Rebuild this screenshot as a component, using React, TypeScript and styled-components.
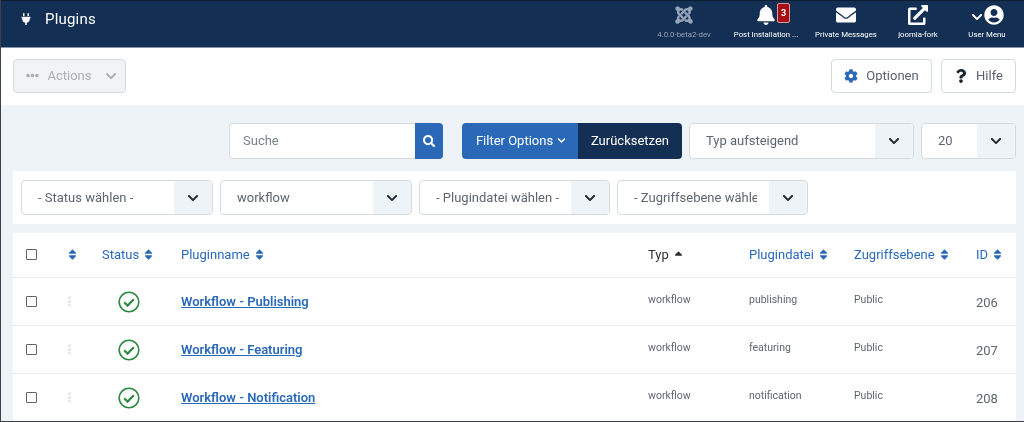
import React from 'react'
import styled, { createGlobalStyle } from 'styled-components'
import {
  FaBell,
  FaChevronDown,
  FaCog,
  FaEllipsisH,
  FaEllipsisV,
  FaEnvelope,
  FaExternalLinkAlt,
  FaJoomla,
  FaPlug,
  FaQuestion,
  FaSearch,
  FaSort,
  FaSortUp,
  FaUserCircle,
} from 'react-icons/fa'

const GlobalStyle = createGlobalStyle`
  html, body {
    margin: 0;
    padding: 0;
    background: #eef3f8;
    overflow: hidden;
  }
  * {
    box-sizing: border-box;
  }
`

const Page = styled.div`
  width: 1024px;
  height: 422px;
  overflow: hidden;
  display: flex;
  flex-direction: column;
  background: #eef3f8;
  border-left: 1px solid #3c4048;
  border-bottom: 1px solid #3c4048;
  font-family: Roboto, 'Liberation Sans', sans-serif;
  color: #5d6670;
  filter: blur(0.35px);
`

const Header = styled.header`
  height: 48px;
  flex: none;
  display: flex;
  align-items: stretch;
  justify-content: space-between;
  background: #132f53;
  border-top: 1px solid #0c1d33;
  border-bottom: 1px solid #7f95b0;
  color: #fff;
`

const Brand = styled.div`
  display: flex;
  align-items: center;
  gap: 13px;
  padding: 0 0 11px 19px;
  font-size: 15px;
  letter-spacing: 0.2px;
  svg {
    font-size: 12px;
  }
`

const HeaderNav = styled.nav`
  display: flex;
  align-items: stretch;
  padding-right: 9px;
`

const NavItem = styled.div<{ $w: number; $muted?: boolean }>`
  width: ${(p) => p.$w}px;
  display: flex;
  flex-direction: column;
  align-items: center;
  padding-top: 3px;
  color: ${(p) => (p.$muted ? '#93a3b8' : '#fff')};
`

const NavIcon = styled.div`
  height: 21px;
  display: flex;
  align-items: center;
  gap: 1px;
  font-size: 20px;
  position: relative;
`

const NavLabel = styled.div`
  margin-top: 5px;
  font-size: 7.8px;
  line-height: 10px;
  white-space: nowrap;
`

const Badge = styled.span`
  position: absolute;
  left: 21px;
  top: -1px;
  width: 13px;
  height: 20px;
  display: flex;
  align-items: center;
  justify-content: center;
  border-radius: 2px;
  border: 1px solid #d99a9a;
  background: #a80f14;
  font-size: 9px;
  font-weight: 700;
  color: #fff;
`

const Toolbar = styled.div`
  height: 57px;
  flex: none;
  display: flex;
  align-items: center;
  justify-content: space-between;
  padding: 0 8px 2px 12px;
  background: #fff;
`

const ToolGroup = styled.div`
  display: flex;
  gap: 9px;
`

const ToolButton = styled.button<{ $w: number; $disabled?: boolean }>`
  width: ${(p) => p.$w}px;
  height: 34px;
  display: flex;
  align-items: center;
  justify-content: center;
  gap: 8px;
  padding: 0;
  font: 400 13px Roboto, sans-serif;
  border-radius: 4px;
  border: 1px solid #d5dadf;
  background: ${(p) => (p.$disabled ? '#f1f3f5' : '#fff')};
  color: ${(p) => (p.$disabled ? '#aab1b8' : '#59626c')};
`

const ActionsButton = styled(ToolButton)`
  padding-left: 4px;
`

const Content = styled.main`
  flex: 1;
  min-height: 0;
  padding: 18px 8px 0 12px;
`

const SelectText = styled.div`
  flex: 1;
  min-width: 0;
  display: flex;
  align-items: center;
  margin: 0 12px 0 16px;
  white-space: nowrap;
  overflow: hidden;
`

const SearchRow = styled.div`
  height: 36px;
  display: flex;
  justify-content: flex-end;
  gap: 7px;
  ${SelectText} {
    padding-bottom: 2px;
  }
`

const SearchBox = styled.div`
  width: 214px;
  display: flex;
  margin-right: 12px;
`

const SearchInput = styled.div`
  flex: 1;
  display: flex;
  align-items: center;
  padding: 0 0 2px 13px;
  font-size: 13px;
  color: #7a828b;
  background: #fff;
  border: 1px solid #d5dadf;
  border-right: 0;
  border-radius: 4px 0 0 4px;
`

const SearchButton = styled.div`
  width: 28px;
  display: flex;
  align-items: center;
  justify-content: center;
  font-size: 12.5px;
  color: #fff;
  background: #2a69b8;
  border-radius: 0 4px 4px 0;
`

const FilterGroup = styled.div`
  display: flex;
  color: #fff;
  font-size: 13px;
`

const FilterButton = styled.div`
  width: 116px;
  display: flex;
  align-items: center;
  justify-content: center;
  gap: 4px;
  padding: 0 0 2px 2px;
  background: #2a69b8;
  border-radius: 4px 0 0 4px;
  svg {
    font-size: 9px;
  }
`

const ResetButton = styled.div`
  width: 104px;
  display: flex;
  align-items: center;
  justify-content: center;
  padding-bottom: 2px;
  background: #132f53;
  border-radius: 0 4px 4px 0;
`

const SelectBox = styled.div<{ $w: number; $h?: number }>`
  width: ${(p) => p.$w}px;
  height: ${(p) => p.$h ?? 36}px;
  display: flex;
  flex: none;
  background: #fff;
  border: 1px solid #d5dadf;
  border-radius: 4px;
  overflow: hidden;
  font-size: 13px;
  color: #5d6670;
`

const SelectArrow = styled.div`
  width: 38px;
  flex: none;
  display: flex;
  align-items: center;
  justify-content: center;
  background: #eef3f8;
  color: #1d2733;
  font-size: 12px;
`

const FilterPanel = styled.div`
  height: 53px;
  margin-top: 12px;
  display: flex;
  align-items: center;
  gap: 7px;
  padding: 0 8px;
  background: #fff;
`

const TablePanel = styled.section`
  margin-top: 9px;
  background: #fff;
  font-size: 13px;
`

const Row = styled.div<{ $head?: boolean }>`
  display: grid;
  grid-template-columns: 41px 36px 79px 467px 101px 105px 122px 39px;
  height: ${(p) => (p.$head ? 45 : 48)}px;
  padding-left: 12px;
  padding-bottom: ${(p) => (p.$head ? 2 : 0)}px;
  align-items: center;
  border-bottom: 1px solid #e7ebef;
`

const Box = styled.span`
  display: block;
  width: 11px;
  height: 11px;
  margin-left: 1px;
  border: 1.5px solid #5f6368;
  border-radius: 1px;
`

const HeadCell = styled.div<{ $dark?: boolean }>`
  display: flex;
  align-items: center;
  gap: 3px;
  color: ${(p) => (p.$dark ? '#2b2f35' : '#2a69b8')};
  svg {
    font-size: 13px;
  }
`

const Handle = styled.div`
  color: #e2e4e7;
  font-size: 11px;
  display: flex;
  margin-left: -2px;
`

const StatusCell = styled.div`
  display: flex;
  padding-left: 16px;
`

const PluginLink = styled.a`
  font-weight: 600;
  font-size: 13px;
  color: #2a69b8;
  text-decoration: underline;
`

const SmallCell = styled.div`
  font-size: 10.5px;
  color: #5d6670;
  margin-top: -4px;
`

const IdCell = styled.div`
  font-size: 13px;
  color: #5d6670;
  margin-top: 1px;
`

const CheckIcon = () => (
  <svg width="22" height="22" viewBox="0 0 22 22" fill="none">
    <circle cx="11" cy="11" r="9.8" stroke="#2f8a3f" strokeWidth="1.6" />
    <path d="M6.2 11.2l3.4 3.4 6.2-6.4" stroke="#2f8a3f" strokeWidth="2.2" />
  </svg>
)

const plugins = [
  { name: 'Workflow - Publishing', file: 'publishing', id: 206 },
  { name: 'Workflow - Featuring', file: 'featuring', id: 207 },
  { name: 'Workflow - Notification', file: 'notification', id: 208 },
]

const filters = [
  { label: '- Status wählen -', w: 192 },
  { label: 'workflow', w: 192 },
  { label: '- Plugindatei wählen -', w: 191 },
  { label: '- Zugriffsebene wählen -', w: 191 },
]

export default function App() {
  return (
    <Page>
      <GlobalStyle />
      <Header>
        <Brand>
          <FaPlug />
          Plugins
        </Brand>
        <HeaderNav>
          <NavItem $w={66} $muted>
            <NavIcon>
              <FaJoomla />
            </NavIcon>
            <NavLabel>4.0.0-beta2-dev</NavLabel>
          </NavItem>
          <NavItem $w={98}>
            <NavIcon>
              <FaBell />
              <Badge>3</Badge>
            </NavIcon>
            <NavLabel>Post Installation ...</NavLabel>
          </NavItem>
          <NavItem $w={62}>
            <NavIcon>
              <FaEnvelope />
            </NavIcon>
            <NavLabel>Private Messages</NavLabel>
          </NavItem>
          <NavItem $w={82}>
            <NavIcon>
              <FaExternalLinkAlt />
            </NavIcon>
            <NavLabel>joomla-fork</NavLabel>
          </NavItem>
          <NavItem $w={56}>
            <NavIcon>
              <FaChevronDown style={{ fontSize: 12, marginTop: 5 }} />
              <FaUserCircle />
            </NavIcon>
            <NavLabel>User Menu</NavLabel>
          </NavItem>
        </HeaderNav>
      </Header>

      <Toolbar>
        <ActionsButton $w={113} $disabled>
          <FaEllipsisH style={{ fontSize: 13 }} />
          Actions
          <FaChevronDown style={{ fontSize: 12, marginLeft: 5 }} />
        </ActionsButton>
        <ToolGroup>
          <ToolButton $w={101}>
            <FaCog style={{ color: '#2a69b8', fontSize: 14 }} />
            Optionen
          </ToolButton>
          <ToolButton $w={75}>
            <FaQuestion style={{ color: '#1d2733', fontSize: 14 }} />
            Hilfe
          </ToolButton>
        </ToolGroup>
      </Toolbar>

      <Content>
        <SearchRow>
          <SearchBox>
            <SearchInput>Suche</SearchInput>
            <SearchButton>
              <FaSearch />
            </SearchButton>
          </SearchBox>
          <FilterGroup>
            <FilterButton>
              Filter Options
              <FaChevronDown />
            </FilterButton>
            <ResetButton>Zurücksetzen</ResetButton>
          </FilterGroup>
          <SelectBox $w={225}>
            <SelectText>Typ aufsteigend</SelectText>
            <SelectArrow>
              <FaChevronDown />
            </SelectArrow>
          </SelectBox>
          <SelectBox $w={95}>
            <SelectText>20</SelectText>
            <SelectArrow>
              <FaChevronDown />
            </SelectArrow>
          </SelectBox>
        </SearchRow>

        <FilterPanel>
          {filters.map((f) => (
            <SelectBox key={f.label} $w={f.w} $h={35}>
              <SelectText>{f.label}</SelectText>
              <SelectArrow>
                <FaChevronDown />
              </SelectArrow>
            </SelectBox>
          ))}
        </FilterPanel>

        <TablePanel>
          <Row $head>
            <Box />
            <HeadCell>
              <FaSort />
            </HeadCell>
            <HeadCell>
              Status <FaSort />
            </HeadCell>
            <HeadCell>
              Pluginname <FaSort />
            </HeadCell>
            <HeadCell $dark>
              Typ <FaSortUp style={{ marginTop: 5 }} />
            </HeadCell>
            <HeadCell>
              Plugindatei <FaSort />
            </HeadCell>
            <HeadCell>
              Zugriffsebene <FaSort />
            </HeadCell>
            <HeadCell>
              ID <FaSort />
            </HeadCell>
          </Row>
          {plugins.map((p) => (
            <Row key={p.id}>
              <Box />
              <Handle>
                <FaEllipsisV />
              </Handle>
              <StatusCell>
                <CheckIcon />
              </StatusCell>
              <div>
                <PluginLink href="#">{p.name}</PluginLink>
              </div>
              <SmallCell>workflow</SmallCell>
              <SmallCell>{p.file}</SmallCell>
              <SmallCell>Public</SmallCell>
              <IdCell>{p.id}</IdCell>
            </Row>
          ))}
        </TablePanel>
      </Content>
    </Page>
  )
}
